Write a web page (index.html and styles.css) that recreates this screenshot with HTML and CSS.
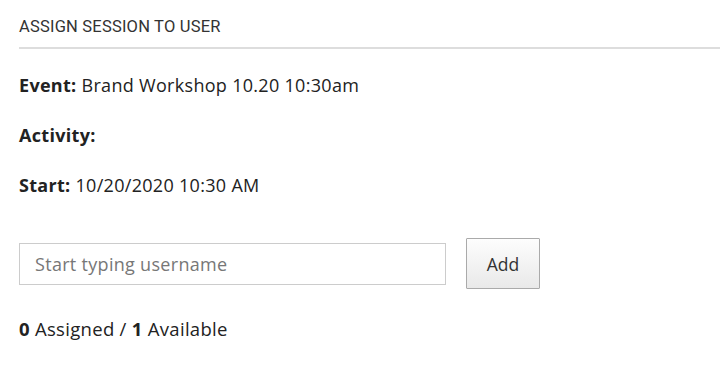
FILE: index.html
```html
<!DOCTYPE html>
<html>
<head>
<meta charset="utf-8">
<link rel="stylesheet" href="styles.css">
</head>
<body>
<div class="panel">
  <h2 class="title">ASSIGN SESSION TO USER</h2>
  <div class="details">
    <p class="row"><b>Event:</b> Brand Workshop 10.20 10:30am</p>
    <p class="row"><b>Activity:</b></p>
    <p class="row"><b>Start:</b> 10/20/2020 10:30 AM</p>
  </div>
  <div class="assign">
    <input class="user-input" type="text" placeholder="Start typing username">
    <button class="add-btn" type="button">Add</button>
  </div>
  <p class="count"><b>0</b> Assigned / <b>1</b> Available</p>
</div>
</body>
</html>
```

FILE: styles.css
```css
html, body {
  margin: 0;
  padding: 0;
  background: #fff;
}
.panel {
  padding-left: 19px;
  font-family: "Open Sans", "Noto Sans", sans-serif;
  color: #222;
}
.title {
  margin: 0;
  padding: 16px 0 10px;
  font-family: Roboto, "Liberation Sans", sans-serif;
  font-weight: 400;
  font-size: 16.5px;
  letter-spacing: 0.2px;
  line-height: 21px;
  color: #333;
  border-bottom: 2px solid #ddd;
}
.details {
  display: flex;
  flex-direction: column;
  gap: 26px;
  padding-top: 24px;
}
.row {
  margin: 0;
  font-size: 18px;
  letter-spacing: 0.3px;
  line-height: 24px;
}
.row b {
  font-weight: 700;
}
.assign {
  display: flex;
  align-items: center;
  gap: 20px;
  margin-top: 41px;
}
.user-input {
  box-sizing: border-box;
  width: 427px;
  height: 42px;
  margin: 0;
  padding: 0 15px;
  border: 1px solid #ccc;
  font-family: "Open Sans", "Noto Sans", sans-serif;
  font-size: 18px;
  letter-spacing: 0.3px;
  color: #333;
  outline: none;
}
.user-input::placeholder {
  color: #777;
}
.add-btn {
  box-sizing: border-box;
  width: 74px;
  height: 51px;
  margin: 0;
  border: 1px solid #aaa;
  border-radius: 1px;
  background: linear-gradient(#fdfdfd, #e9e9e9);
  font-family: "Open Sans", "Noto Sans", sans-serif;
  font-size: 17.5px;
  color: #333;
}
.count {
  margin: 28px 0 0;
  font-size: 18.5px;
  letter-spacing: 0.3px;
  line-height: 24px;
}
```
